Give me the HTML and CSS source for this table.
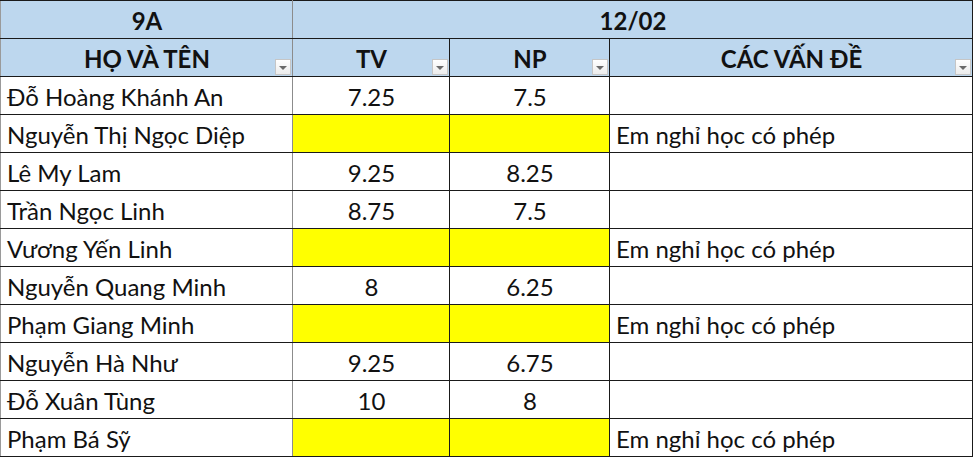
FILE: index.html
```html
<!DOCTYPE html>
<html lang="vi">
<head>
<meta charset="utf-8">
<title>9A</title>
<link rel="stylesheet" href="styles.css">
</head>
<body>
<table class="sheet">
  <colgroup>
    <col class="c-name">
    <col class="c-tv">
    <col class="c-np">
    <col class="c-note">
  </colgroup>
  <thead>
    <tr class="hdr">
      <th class="first">9A</th>
      <th colspan="3">12/02</th>
    </tr>
    <tr class="hdr">
      <th class="first">HỌ VÀ TÊN<span class="filter"></span></th>
      <th>TV<span class="filter"></span></th>
      <th>NP<span class="filter"></span></th>
      <th>CÁC VẤN ĐỀ<span class="filter"></span></th>
    </tr>
  </thead>
  <tbody>
    <tr><td class="first name">Đỗ Hoàng Khánh An</td><td class="num">7.25</td><td class="num">7.5</td><td class="note"></td></tr>
    <tr><td class="first name">Nguyễn Thị Ngọc Diệp</td><td class="num yellow"></td><td class="num yellow"></td><td class="note">Em nghỉ học có phép</td></tr>
    <tr><td class="first name">Lê My Lam</td><td class="num">9.25</td><td class="num">8.25</td><td class="note"></td></tr>
    <tr><td class="first name">Trần Ngọc Linh</td><td class="num">8.75</td><td class="num">7.5</td><td class="note"></td></tr>
    <tr><td class="first name">Vương Yến Linh</td><td class="num yellow"></td><td class="num yellow"></td><td class="note">Em nghỉ học có phép</td></tr>
    <tr><td class="first name">Nguyễn Quang Minh</td><td class="num">8</td><td class="num">6.25</td><td class="note"></td></tr>
    <tr><td class="first name">Phạm Giang Minh</td><td class="num yellow"></td><td class="num yellow"></td><td class="note">Em nghỉ học có phép</td></tr>
    <tr><td class="first name">Nguyễn Hà Như</td><td class="num">9.25</td><td class="num">6.75</td><td class="note"></td></tr>
    <tr><td class="first name">Đỗ Xuân Tùng</td><td class="num">10</td><td class="num">8</td><td class="note"></td></tr>
    <tr><td class="first name">Phạm Bá Sỹ</td><td class="num yellow"></td><td class="num yellow"></td><td class="note">Em nghỉ học có phép</td></tr>
  </tbody>
</table>
</body>
</html>
```

FILE: styles.css
```css
html, body {
  margin: 0;
  padding: 0;
  background: #ffffff;
}

.sheet {
  border-collapse: collapse;
  table-layout: fixed;
  width: 972px;
  font-family: Lato, "Open Sans", sans-serif;
  font-size: 24px;
  color: #111111;
}

.c-name { width: 292px; }
.c-tv { width: 157px; }
.c-np { width: 160px; }
.c-note { width: 363px; }

.sheet th,
.sheet td {
  height: 38px;
  padding: 0 5px 0 6px;
  border: 1px solid #1a1a1a;
  box-sizing: border-box;
  vertical-align: bottom;
  line-height: 35px;
  white-space: nowrap;
  overflow: hidden;
}

.sheet .first {
  border-left-color: #9a9a9a;
  border-right-color: #8c8c8c;
}

.hdr th {
  position: relative;
  background: #bdd7ee;
  font-weight: 700;
  text-align: center;
  color: #111111;
}

.num {
  text-align: center;
}

.name,
.note {
  text-align: left;
}

.yellow {
  background: #ffff00;
}

.filter {
  position: absolute;
  right: 1px;
  bottom: 1px;
  width: 16px;
  height: 16px;
  box-sizing: border-box;
  border: 1px solid #c6c6c6;
  background: linear-gradient(#ffffff, #ececec);
}

.filter::after {
  content: "";
  position: absolute;
  left: 3px;
  top: 6px;
  border-left: 4px solid transparent;
  border-right: 4px solid transparent;
  border-top: 4px solid #6a6a6a;
}
```
